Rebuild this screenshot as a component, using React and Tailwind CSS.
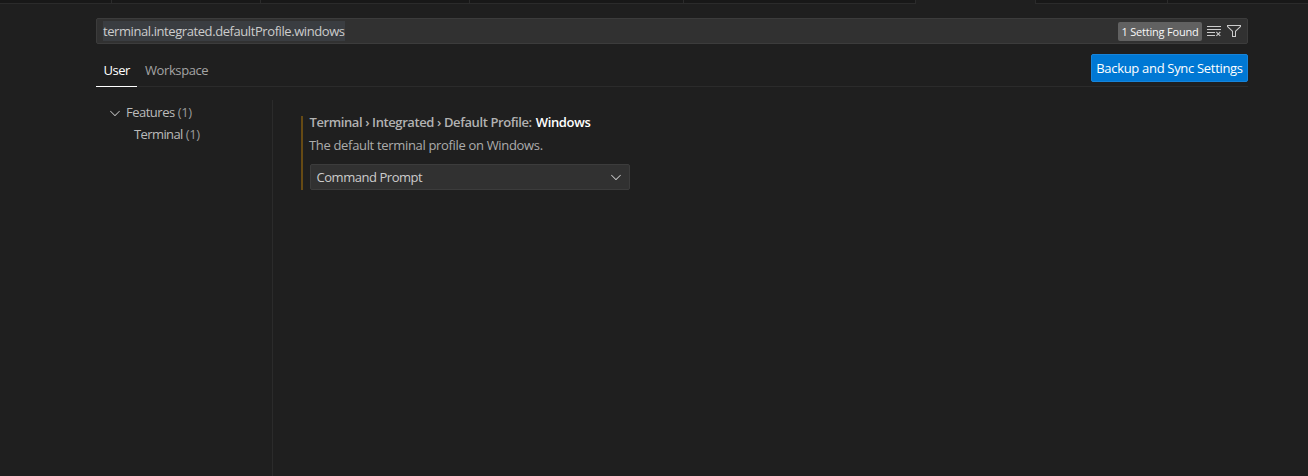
import { VscChevronDown, VscClearAll, VscFilter } from "react-icons/vsc";

const TABS = [
  { id: "a", size: "w-[112px]" },
  { id: "b", size: "w-[149px]" },
  { id: "c", size: "w-[209px]" },
  { id: "d", size: "w-[214px]" },
  { id: "e", size: "w-[232px]" },
  { id: "f", size: "w-[120px]", active: true },
  { id: "g", size: "w-[132px]" },
];

function TabStrip() {
  return (
    <div className="flex h-1 bg-[#181818]">
      {TABS.map((tab) => (
        <div
          key={tab.id}
          className={`${tab.size} shrink-0 border-r border-[#2b2b2b] ${
            tab.active ? "bg-[#1f1f1f]" : "border-b"
          }`}
        />
      ))}
      <div className="flex-1 border-b border-[#2b2b2b]" />
    </div>
  );
}

function SearchBox() {
  return (
    <div className="flex h-[26px] items-center rounded-[2px] border border-[#3c3c3c] bg-[#313131] pr-[5px] pl-[6px]">
      <span className="h-5 bg-[#3a3d41] leading-[21px] tracking-[-0.42px] text-[#cccccc]">
        terminal.integrated.defaultProfile.windows
      </span>
      <span className="ml-auto flex h-[19px] w-[84px] items-center justify-center rounded-[2px] bg-[#616161] pt-[2px] text-[11px] tracking-[-0.2px] text-[#f8f8f8]">
        1 Setting Found
      </span>
      <VscClearAll className="ml-1 size-4 text-[#cccccc]" />
      <VscFilter className="ml-1 size-4 text-[#cccccc]" />
    </div>
  );
}

function ScopeBar() {
  return (
    <div className="flex h-[33px] justify-between border-b border-[#2b2b2b]">
      <div className="flex h-[33px] leading-[33px]">
        <div className="w-[41px] border-b border-white pl-[7.5px] tracking-[-0.5px] text-white">User</div>
        <div className="pl-2 tracking-[-0.4px] text-[#a4a4a4]">Workspace</div>
      </div>
      <button className="h-7 w-[157px] rounded-[2px] border border-[#1784da] bg-[#0078d4] leading-[26px] tracking-[-0.31px] whitespace-nowrap text-white">
        Backup and Sync Settings
      </button>
    </div>
  );
}

function Outline() {
  return (
    <nav className="w-[177px] border-r border-[#2b2b2b] pt-[2px] text-[#bbbbbb]">
      <div className="flex h-[22px] items-center pl-[11px]">
        <VscChevronDown className="mr-[3px] size-4" />
        <span className="tracking-[-0.5px]">Features</span>
        <span className="ml-[3px] tracking-[-0.35px] text-[#999999]">(1)</span>
      </div>
      <div className="flex h-[22px] items-center pl-[38px]">
        <span className="tracking-[-0.6px]">Terminal</span>
        <span className="ml-[3px] tracking-[-0.35px] text-[#999999]">(1)</span>
      </div>
    </nav>
  );
}

function Setting() {
  return (
    <section className="mt-4 ml-7 h-[74px] w-[329px] border-l-2 border-[#664a14] pl-[7px] whitespace-nowrap">
      <h2 className="-ml-[0.5px] h-[13px] leading-[13px] font-semibold tracking-[-0.4px] text-[#b2b2b2]">
        Terminal › Integrated › Default Profile:{" "}
        <span className="ml-px tracking-[-0.35px] text-white">Windows</span>
      </h2>
      <p className="-ml-px mt-[6px] h-5 leading-5 tracking-[-0.33px] text-[#acacac]">
        The default terminal profile on Windows.
      </p>
      <div className="mt-[9px] flex h-[26px] items-center justify-between rounded-[2px] border border-[#3c3c3c] bg-[#313131] pr-[5.5px] pl-[5.5px] text-[#cccccc]">
        <span className="pt-px tracking-[-0.46px]">Command Prompt</span>
        <VscChevronDown className="size-4" />
      </div>
    </section>
  );
}

export default function App() {
  return (
    <div className="flex h-[476px] w-[1308px] flex-col overflow-hidden bg-[#1f1f1f] font-['Open_Sans',sans-serif] text-[13px]">
      <TabStrip />
      <main className="ml-24 flex w-[1152px] flex-1 flex-col pt-[14px]">
        <SearchBox />
        <div className="mt-[10px]">
          <ScopeBar />
        </div>
        <div className="mt-[13px] flex flex-1">
          <Outline />
          <Setting />
        </div>
      </main>
    </div>
  );
}
